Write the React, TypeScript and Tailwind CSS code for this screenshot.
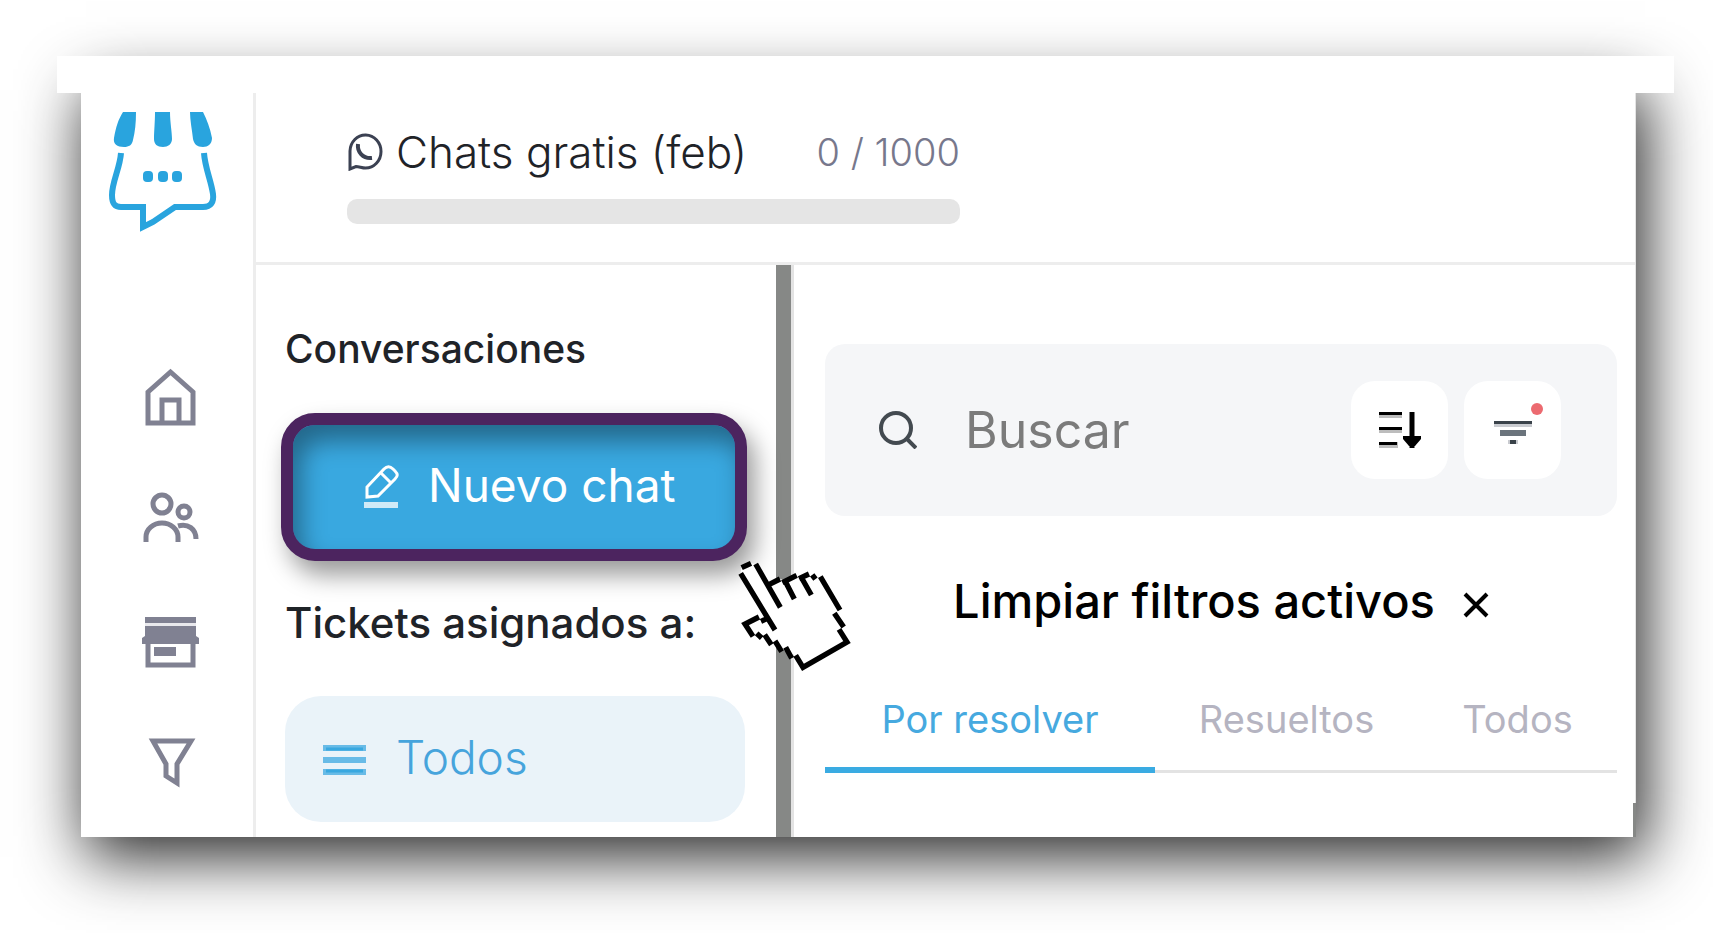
import type { ReactNode } from "react";

const AppLogo = () => (
  <svg width="108" height="120" viewBox="0 0 108 120" fill="none" aria-hidden="true">
    <g fill="#29a4de">
      <path d="M14 0H27C27 11 26 20 24 28C23 33 20 35 15 35C8 35 4 32 5 26C7 15 9 8 14 0Z" />
      <path d="M46 0H61C61 10 63 20 63 27C63 32 59 35 54 35C48 35 45 32 45 27C45 20 46 10 46 0Z" />
      <path d="M81 0H94C98 8 101 16 103 26C103 32 99 35 94 35C88 35 85 32 84 27C83 18 81 8 81 0Z" />
      <rect x="34" y="59" width="10" height="11" rx="4" />
      <rect x="49" y="59" width="10" height="11" rx="4" />
      <rect x="63" y="59" width="10" height="11" rx="4" />
    </g>
    <path
      d="M12 41C11 56 3 70 3 83C3 91 5 95 12 95H34V115L44 110L66 95H94C102 95 105 90 104 82C102 68 96 56 95 41"
      stroke="#29a4de"
      strokeWidth="6"
    />
  </svg>
);

const WhatsappIcon = () => (
  <svg width="37" height="38" viewBox="0 0 37 38" fill="none" stroke="#3b4152" strokeWidth="3" aria-hidden="true">
    <path d="M3 36V18A15.5 16.5 0 1 1 18.5 35C15 35 12 33.500 9 33.500Z" />
    <path d="M11 11C10 19 16 26 25 25" strokeWidth="4" />
  </svg>
);

const NavIcon = ({ children }: { children: ReactNode }) => (
  <svg width="64" height="64" viewBox="0 0 64 64" fill="none" stroke="#808192" strokeWidth="5" aria-hidden="true">
    {children}
  </svg>
);

const navItems = [
  {
    label: "Inicio",
    icon: (
      <NavIcon>
        <path d="M9 26L31.500 6L54 26V57H9Z" />
        <path d="M23 57V34H40V57" />
      </NavIcon>
    ),
  },
  {
    label: "Contactos",
    icon: (
      <NavIcon>
        <circle cx="23" cy="16" r="9" />
        <path d="M7 54V49A16 14 0 0 1 39 49V54" />
        <circle cx="45" cy="24" r="6" />
        <path d="M39 38C49 35 57 41 57 51" />
      </NavIcon>
    ),
  },
  {
    label: "Tienda",
    icon: (
      <NavIcon>
        <path d="M6 7H57V13H6ZM6 16H57V26L60 28V34H3V28L6 26ZM15 37H37V46H15Z" fill="#808192" stroke="none" />
        <path d="M6 13H57V16H6Z" fill="#e9e9ed" stroke="none" />
        <path d="M9 34V55H54V34" />
      </NavIcon>
    ),
  },
  {
    label: "Embudo",
    icon: (
      <NavIcon>
        <path d="M14 9H52L38 32V51L27 44V32Z" />
      </NavIcon>
    ),
  },
];

const PencilIcon = () => (
  <svg width="37" height="44" viewBox="0 0 37 44" fill="none" stroke="#fff" strokeWidth="3" className="mt-1" aria-hidden="true">
    <path d="M4 32V22L21 4C24 1 27 1 30 4L32 6C35 9 35 11 32 14L15 31Z" />
    <path d="M18 8L28 18" />
    <path d="M1 40H35" strokeWidth="6" stroke="#d0eaf7" />
  </svg>
);

const SortIcon = () => (
  <svg width="44" height="38" viewBox="0 0 44 38" aria-hidden="true">
    <path d="M1 4H24M1 19H24M1 34H20" stroke="#bdbdbd" strokeWidth="6" />
    <path d="M1 2.500H24M1 17.500H24M1 32.500H19" stroke="#000" strokeWidth="3" />
    <path d="M34 1V37" stroke="#000" strokeWidth="5" />
    <path d="M25 25H43V28L37 35H31L25 28Z" />
  </svg>
);

const FilterIcon = () => (
  <svg width="40" height="26" viewBox="0 0 40 26" aria-hidden="true">
    <path d="M1 4H39V7H1Z" fill="#c9cbd0" />
    <path d="M1 1H39V4H1Z" fill="#3a424a" />
    <path d="M7 10H33V16H7Z" fill="#6b747c" />
    <path d="M15 20H25V24H15Z" fill="#c9cbd0" />
    <path d="M17 20H23V24H17Z" fill="#3a424a" />
  </svg>
);

const HandCursor = () => (
  <svg
    className="pointer-events-none absolute -right-[118px] -bottom-[119px] z-10"
    width="140"
    height="130"
    viewBox="0 0 420 390"
    aria-hidden="true"
  >
    <path
      d="M50 52L78 40L92 42L133 102L165 86L180 92L215 76L228 82L252 72L286 80L345 180L332 192L355 230L345 240L366 276L234 352L212 316L190 308L160 290L130 270L100 258L80 256L60 222L102 200L122 204L46 70Z"
      fill="#fff"
    />
    <path
      d="M50 53L78 40M47 70L150 240M92 42L166 172M133 103L165 87M172 98L215 76M180 92L208 147M222 86L252 72M230 84L259 135M260 86L273 76M286 80L345 180M328 190L356 231M342 238L366 276L234 352L212 316M182 292L200 325M150 273L170 305M119 254L139 284M95 250L110 264M102 201L60 222L84 259M108 214L126 206"
      fill="none"
      stroke="#000"
      strokeWidth="16"
    />
  </svg>
);

const tabs = [
  { label: "Por resolver", className: "grow-330 border-[#3aabe2] text-[#46a9df]" },
  { label: "Resueltos", className: "grow-263 border-transparent text-[#b5b4c1]" },
  { label: "Todos", className: "grow-199 border-transparent text-[#b5b4c1]" },
];

const Sidebar = () => (
  <aside className="w-[175px] shrink-0 border-r-[3px] border-[#ededed] pt-[19px]">
    <a href="#" aria-label="Panel principal" className="ml-7 block w-[108px]">
      <AppLogo />
    </a>
    <nav className="mt-[134px] ml-[58px] flex flex-col gap-[58px]">
      {navItems.map((item) => (
        <a key={item.label} href="#" aria-label={item.label} className="block size-16">
          {item.icon}
        </a>
      ))}
    </nav>
  </aside>
);

const UsageHeader = () => (
  <header className="border-b-[3px] border-[#ededed] pt-[35px] pb-[38px] pl-[91px]">
    <div className="w-[613px]">
      <div className="flex items-center justify-between leading-[48px]">
        <span className="flex items-center gap-3 text-[44px] font-light text-[#1f2328]">
          <WhatsappIcon />
          Chats gratis (feb)
        </span>
        <span className="text-[38px] font-light text-[#77788c]">0 / 1000</span>
      </div>
      <div
        role="progressbar"
        aria-label="Chats gratis"
        aria-valuenow={0}
        aria-valuemax={1000}
        className="mt-[23px] h-[25px] rounded-[10px] bg-[#e5e5e5]"
      />
    </div>
  </header>
);

const Conversations = () => (
  <section className="w-[520px] shrink-0 pt-[60px] pr-[29px] pb-[15px] pl-[25px]">
    <h2 className="pl-1 text-[39px] leading-[48px] font-medium text-[#1f2328]">Conversaciones</h2>
    <div className="relative mt-10">
      <button
        type="button"
        className="flex h-[148px] w-full items-center gap-7 rounded-[34px] border-12 border-[#4c245f] bg-[#39a8e0] pb-1 pl-[70px] text-[46px] leading-[56px] text-white shadow-[8px_14px_24px_rgba(0,0,0,0.4),inset_8px_16px_24px_rgba(0,0,0,0.38)]"
      >
        <PencilIcon />
        Nuevo chat
      </button>
      <HandCursor />
    </div>
    <h2 className="mt-[38px] pl-1 text-[42px] leading-[48px] font-medium text-[#1f2328]">Tickets asignados a:</h2>
    <button
      type="button"
      className="mt-[49px] ml-1 flex h-[126px] w-[460px] items-center gap-[30px] rounded-[36px] bg-[#eaf3f9] pl-[38px] text-[46px] leading-[56px] font-light text-[#46a4dc]"
    >
      <svg width="43" height="32" viewBox="0 0 43 32" className="mt-0.5" aria-hidden="true">
        <path d="M0 4H43M0 16H43M0 28H43" stroke="#68bbe7" strokeWidth="6" />
        <path d="M3 5H40M3 27H40" stroke="#39a8e0" strokeWidth="3" />
      </svg>
      <span className="pb-1">Todos</span>
    </button>
  </section>
);

const TicketList = () => (
  <section className="min-w-0 grow pt-[79px] pr-[18px] pl-[31px]">
    <div className="flex h-[172px] items-center rounded-[20px] bg-[#f5f6f8] pr-14 pl-[54px]">
      <svg width="38" height="38" viewBox="0 0 38 38" fill="none" stroke="#434a50" strokeWidth="4" className="shrink-0" aria-hidden="true">
        <circle cx="17" cy="17" r="15" />
        <path d="M27 27L37 37" />
      </svg>
      <input
        type="text"
        placeholder="Buscar"
        aria-label="Buscar"
        className="ml-12 min-w-0 grow bg-transparent text-[50px] leading-[60px] text-[#333] outline-none placeholder:text-[#7b7b7b]"
      />
      <div className="flex gap-4">
        <button type="button" aria-label="Ordenar" className="flex h-[98px] w-[97px] items-center justify-center rounded-[24px] bg-white">
          <SortIcon />
        </button>
        <button type="button" aria-label="Filtrar" className="relative flex h-[98px] w-[97px] items-center justify-center rounded-[24px] bg-white pt-1.5">
          <FilterIcon />
          <span className="absolute top-[22px] right-[18px] size-3 rounded-full bg-[#ec6a70]" />
        </button>
      </div>
    </div>
    <button
      type="button"
      className="mx-auto mt-[57px] flex items-center gap-7 text-[47px] leading-[56px] font-medium text-black"
    >
      Limpiar filtros activos
      <svg width="26" height="26" viewBox="0 0 26 26" className="mt-2" stroke="#000" strokeWidth="4" aria-hidden="true">
        <path d="M2 2L24 24M24 2L2 24" />
      </svg>
    </button>
    <div role="tablist" className="mt-[66px] flex shadow-[inset_0_-3px_0_#e3e3e3]">
      {tabs.map((tab, i) => (
        <button
          key={tab.label}
          type="button"
          role="tab"
          aria-selected={i === 0}
          className={`basis-0 border-b-6 pb-6 text-[38px] leading-[48px] ${tab.className}`}
        >
          {tab.label}
        </button>
      ))}
    </div>
  </section>
);

export default function App() {
  return (
    <div className="min-h-screen overflow-hidden bg-white pt-14 pr-[39px] pb-24 pl-[57px] font-['Inter',sans-serif] whitespace-nowrap">
      <div className="relative z-10 h-[37px] bg-white" />
      <div className="relative mr-[38px] -mt-[19px] ml-6 flex border-r border-[#e4e4e4] bg-white pt-[19px] shadow-[7px_18px_60px_2px_rgba(0,0,0,0.85)]">
        <Sidebar />
        <div className="min-w-0 grow">
          <UsageHeader />
          <div className="flex">
            <Conversations />
            <div className="w-[18px] shrink-0 border-r-[3px] border-[#e3e3e3] bg-[#868886]" />
            <TicketList />
          </div>
        </div>
        <div className="absolute -right-px bottom-0 h-[34px] w-[3px] bg-[#868886]" />
      </div>
    </div>
  );
}
